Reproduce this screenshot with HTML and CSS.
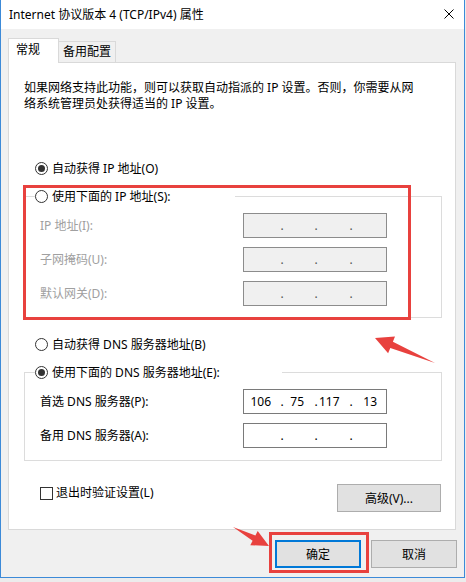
FILE: index.html
```html
<!DOCTYPE html>
<html lang="zh-CN">
<head>
  <meta charset="UTF-8">
  <meta name="viewport" content="width=device-width, initial-scale=1.0">
  <title>Internet 协议版本 4 (TCP/IPv4) 属性</title>
  <link rel="stylesheet" href="styles.css">
</head>
<body>
  <div class="window">
    <div class="titlebar">
      <span class="title">Internet 协议版本 4 (TCP/IPv4) 属性</span>
      <svg class="close" width="10" height="10" viewBox="0 0 10 10">
        <path d="M0.5 0.5 L9.5 9.5 M9.5 0.5 L0.5 9.5" stroke="#000" stroke-width="1" fill="none"/>
      </svg>
    </div>

    <div class="dialog">
      <div class="tabs">
        <div class="tab tab-active">常规</div>
        <div class="tab">备用配置</div>
      </div>

      <div class="panel">
        <p class="intro">如果网络支持此功能，则可以获取自动指派的 IP 设置。否则，你需要从网<br>络系统管理员处获得适当的 IP 设置。</p>

        <div class="option option-first"><span class="radio radio-on"></span>自动获得 IP 地址(O)</div>

        <fieldset class="group group-ip">
          <legend class="legend legend-ip"><span class="radio"></span>使用下面的 IP 地址(S):</legend>
          <div class="fields">
            <span class="label label-off">IP 地址(I):</span>
            <div class="ip ip-off"><span class="oct"></span><span class="sep">.</span><span class="oct"></span><span class="sep">.</span><span class="oct"></span><span class="sep">.</span><span class="oct"></span></div>
            <span class="label label-off">子网掩码(U):</span>
            <div class="ip ip-off"><span class="oct"></span><span class="sep">.</span><span class="oct"></span><span class="sep">.</span><span class="oct"></span><span class="sep">.</span><span class="oct"></span></div>
            <span class="label label-off">默认网关(D):</span>
            <div class="ip ip-off"><span class="oct"></span><span class="sep">.</span><span class="oct"></span><span class="sep">.</span><span class="oct"></span><span class="sep">.</span><span class="oct"></span></div>
          </div>
        </fieldset>

        <div class="option option-dns"><span class="radio"></span>自动获得 DNS 服务器地址(B)</div>

        <fieldset class="group group-dns">
          <legend class="legend legend-dns"><span class="radio radio-on"></span>使用下面的 DNS 服务器地址(E):</legend>
          <div class="fields">
            <span class="label">首选 DNS 服务器(P):</span>
            <div class="ip"><span class="oct">106</span><span class="sep">.</span><span class="oct">75</span><span class="sep">.</span><span class="oct">117</span><span class="sep">.</span><span class="oct">13</span></div>
            <span class="label">备用 DNS 服务器(A):</span>
            <div class="ip"><span class="oct"></span><span class="sep">.</span><span class="oct"></span><span class="sep">.</span><span class="oct"></span><span class="sep">.</span><span class="oct"></span></div>
          </div>
        </fieldset>

        <div class="panel-footer">
          <div class="check"><span class="box"></span>退出时验证设置(L)</div>
          <button class="btn btn-advanced">高级(V)...</button>
        </div>
      </div>

      <div class="actions">
        <button class="btn btn-ok">确定</button>
        <button class="btn btn-cancel">取消</button>
      </div>
    </div>
  </div>

  <!-- red annotations drawn over the dialog -->
  <svg class="marks" width="466" height="582" viewBox="0 0 466 582">
    <rect x="24.5" y="186.5" width="385" height="132" fill="none" stroke="#e8413e" stroke-width="3"/>
    <rect x="270.5" y="533.5" width="97" height="38" fill="none" stroke="#e8413e" stroke-width="3"/>
    <polygon points="375,338 395,336.6 392.9,341.7 435,363 390.3,348.1 388.1,353.2" fill="#e8413e"/>
    <polygon points="269,546 250.3,545.2 252.6,540.8 233,527 255.4,535.5 257.7,531" fill="#e8413e"/>
  </svg>
</body>
</html>
```

FILE: styles.css
```css
* {
  box-sizing: border-box;
}

html, body {
  margin: 0;
  padding: 0;
}

body {
  position: relative;
  width: 466px;
  height: 582px;
  overflow: hidden;
  background: #ececec;
  font-family: "Noto Sans", "Noto Sans CJK SC", sans-serif;
  font-size: 12px;
  color: #000;
}

.window {
  width: 465px;
  height: 578px;
  border: 1px solid #3c8ad8;
  border-top: 0;
  background: #f0f0f0;
}

.titlebar {
  height: 29px;
  background: #fff;
  display: flex;
  align-items: center;
  justify-content: space-between;
  padding: 0 10px 0 8px;
}

.title {
  line-height: 16px;
}

.close {
  display: block;
  margin-top: -1px;
}

.dialog {
  padding: 9px 8px 9px 7px;
}

/* tabs */
.tabs {
  display: flex;
  align-items: flex-end;
  height: 24px;
}

.tab {
  border: 1px solid #d9d9d9;
  border-bottom: 0;
  line-height: 16px;
  background: #f0f0f0;
  height: 21px;
  width: 58px;
  margin-left: -1px;
  padding: 2px 0 0 4px;
}

.tab-active {
  position: relative;
  z-index: 1;
  width: 51px;
  height: 25px;
  margin: 0 0 -1px 0;
  padding: 3px 0 0 7px;
  background: #fff;
}

.panel {
  width: 448px;
  background: #fff;
  border: 1px solid #d9d9d9;
  padding: 0 0 17px 0;
}

.intro {
  margin: 17px 0 0 15px;
  line-height: 16px;
}

/* radios */
.option {
  display: flex;
  align-items: center;
  height: 16px;
  margin-left: 26px;
}

.option-first {
  margin-top: 48px;
}

.option-dns {
  margin-top: 18px;
}

.radio {
  width: 13px;
  height: 13px;
  border: 1px solid #333;
  border-radius: 50%;
  background: #fff;
  margin-right: 4px;
  display: flex;
  align-items: center;
  justify-content: center;
  flex: none;
}

.radio-on::after {
  content: "";
  width: 7px;
  height: 7px;
  border-radius: 50%;
  background: #333;
}

/* group boxes */
.group {
  width: 418px;
  margin: 12px 0 0 15px;
  padding: 0 0 11px 0;
  border: 1px solid #dcdcdc;
  min-width: 0;
}

.group-dns {
  padding-bottom: 12px;
}

.legend {
  display: flex;
  align-items: center;
  height: 16px;
  padding: 0;
  margin-left: 10px;
  background: #fff;
}

.legend-ip {
  width: 200px;
}

.legend-dns {
  width: 247px;
}

.fields {
  display: grid;
  grid-template-columns: 203px 144px;
  row-gap: 9px;
  align-items: center;
  margin: 9px 0 0 15px;
}

.label {
  line-height: 16px;
}

.label-off {
  color: #a0a0a0;
}

.ip {
  display: flex;
  align-items: center;
  width: 144px;
  height: 25px;
  border: 1px solid #7a7a7a;
  background: #fff;
  line-height: 14px;
  padding-top: 1px;
}

.ip-off {
  background: #f0f0f0;
  border-color: #8c8c8c;
  color: #555;
}

.oct {
  text-align: right;
  padding-right: 9px;
  height: 14px;
}

.oct:nth-child(1) { width: 35px; padding-right: 8px; }
.oct:nth-child(3) { width: 28px; }
.oct:nth-child(5) { width: 29px; }
.oct:nth-child(7) { width: 32px; }

.sep {
  width: 6px;
  text-align: center;
  height: 14px;
}

/* footer of the tab page */
.panel-footer {
  display: flex;
  justify-content: space-between;
  align-items: flex-start;
  margin-top: 23px;
}

.check {
  display: flex;
  align-items: center;
  margin: 2px 0 0 31px;
  line-height: 14px;
}

.box {
  width: 13px;
  height: 13px;
  border: 1px solid #333;
  background: #fff;
  margin-right: 3px;
}

.btn {
  height: 28px;
  padding: 0;
  border: 1px solid #adadad;
  background: #e1e1e1;
  font: inherit;
  color: #000;
}

.btn-advanced {
  width: 104px;
  margin-right: 14px;
}

.actions {
  display: flex;
  justify-content: flex-end;
  gap: 10px;
  margin: 10px -1px 0 0;
}

.btn-ok,
.btn-cancel {
  width: 86px;
}

.btn-ok {
  border: 2px solid #0078d7;
}

.marks {
  position: absolute;
  top: 0;
  left: 0;
  pointer-events: none;
}
```
